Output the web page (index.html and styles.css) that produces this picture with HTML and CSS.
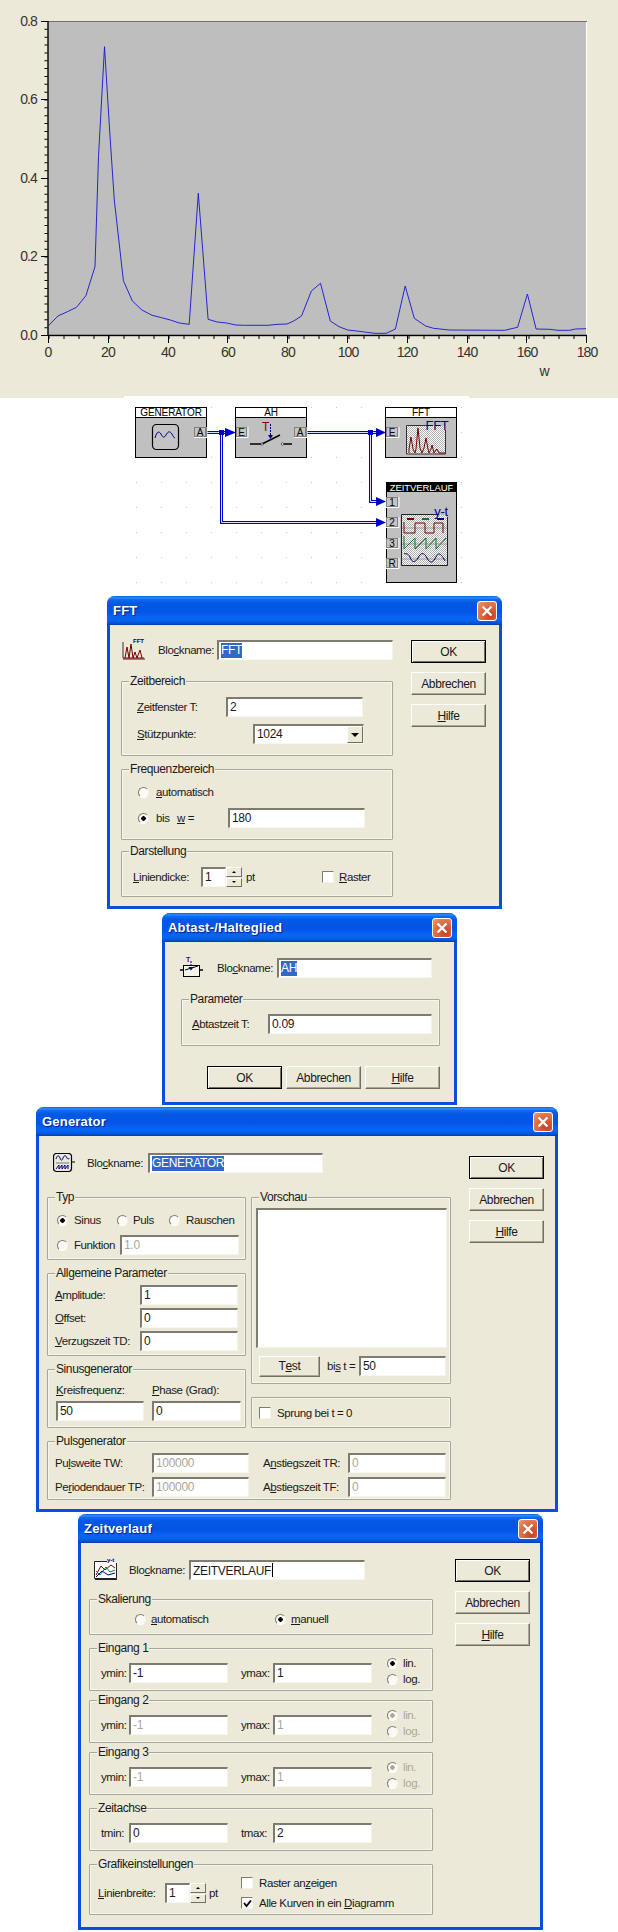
FILE: index.html
```html
<!DOCTYPE html>
<html lang="en">
<head>
    <meta charset="UTF-8">
    <title>FFT Simulation</title>
    <link rel="stylesheet" href="styles.css">
</head>
<body>
    <section class="chart">
        <svg class="chart-svg" width="618" height="396" viewBox="0 0 618 396">
            <rect x="48" y="21" width="539" height="314" fill="#bebebe"/>
            <path d="M48 21.5H587" stroke="#6e6e6e"/>
            <path d="M586.5 22V336M49 336.5H587" stroke="#fff"/>
            <path d="M48 21V336M48 335.5H587" stroke="#000" stroke-width="1.4"/>
            <path d="M41 21.5H48M41 99.5H48M41 178.5H48M41 256.5H48M41 335.5H48" stroke="#000"/>
            <path d="M46 21V335" stroke="#000" stroke-width="3" stroke-dasharray="1 6.85"/>
            <path d="M48.5 337H587" stroke="#000" stroke-width="4" stroke-dasharray="1 14"/>
            <path d="M48.5 335V343M108.5 335V343M168.5 335V343M227.5 335V343M287.5 335V343M347.5 335V343M407.5 335V343M467.5 335V343M526.5 335V343M586.5 335V343" stroke="#000"/>
            <polyline class="curve" points="48.5,325.7 57.9,316 67.4,311.7 76.5,307.3 85.9,295.7 95,266.7 98.5,156.7 104.5,46.7 109.6,130 114.3,200 123.4,280.7 132.4,301 141.9,310 152.1,315.3 161.6,317.7 170.3,320 179.3,323 189.2,324.3 198.3,193.3 208.1,319.3 217.2,322 226.6,323 235.7,325 244.4,325.3 268,325.3 277.9,324.3 287,324 293.7,321 301.5,316 311.4,291 320.5,283.3 330.3,321 339,326.7 347.7,330 356.7,331 364.6,332 374.5,333.3 386.3,333.3 395.4,329 405.2,286 414.3,318.3 425.7,326 433.6,328.3 449.3,330 504.5,330.3 517.6,327.3 527.4,294 536.1,329 549.9,329.3 557.7,330.3 569.6,330.3 575.5,329 586.1,328.7"/>
            <g class="axis-y">
                <text x="37" y="26">0.8</text>
                <text x="37" y="104">0.6</text>
                <text x="37" y="183">0.4</text>
                <text x="37" y="261">0.2</text>
                <text x="37" y="340">0.0</text>
            </g>
            <g class="axis-x">
                <text x="48" y="357">0</text>
                <text x="108" y="357">20</text>
                <text x="168" y="357">40</text>
                <text x="228" y="357">60</text>
                <text x="288" y="357">80</text>
                <text x="348" y="357">100</text>
                <text x="407" y="357">120</text>
                <text x="467" y="357">140</text>
                <text x="527" y="357">160</text>
                <text x="587" y="357">180</text>
                <text x="544" y="376">w</text>
            </g>
        </svg>
    </section>

    <section class="diagram">
        <svg width="345" height="200" viewBox="124 396 345 200">
            <defs>
                <pattern id="grid-dots" x="11" y="7" width="25" height="25" patternUnits="userSpaceOnUse">
                    <rect width="1" height="1" fill="#c4c4c4"/>
                </pattern>
                <pattern id="dither" width="2" height="2" patternUnits="userSpaceOnUse">
                    <rect width="2" height="2" fill="#fff"/>
                    <rect width="1" height="1" fill="#b0b0b0"/>
                    <rect x="1" y="1" width="1" height="1" fill="#b0b0b0"/>
                </pattern>
            </defs>
            <rect x="124" y="396" width="345" height="200" fill="url(#grid-dots)"/>

            <!-- wires -->
            <g class="wire">
                <path d="M207 432.5H226"/>
                <path d="M307 432.5H376"/>
                <path d="M221.5 432.5V522.5H378"/>
                <path d="M370.5 432.5V501.5H378"/>
            </g>
            <g class="wire-inner">
                <path d="M207 432.5H226"/>
                <path d="M307 432.5H376"/>
                <path d="M221.5 432.5V522.5H378"/>
                <path d="M370.5 432.5V501.5H378"/>
            </g>
            <g fill="#0000c8">
                <rect x="219" y="430" width="5" height="5"/>
                <rect x="368" y="430" width="5" height="5"/>
                <path d="M225 428L236 432.5L225 437ZM376 428L386 432.5L376 437ZM376 497L386 501.5L376 506ZM376 518L386 522.5L376 527Z"/>
            </g>

            <!-- GENERATOR -->
            <rect class="block" x="135.5" y="407.5" width="71" height="50"/>
            <rect class="block-head" x="135.5" y="407.5" width="71" height="10"/>
            <text class="block-label" x="171" y="416.3">GENERATOR</text>
            <rect x="152.5" y="424.5" width="26" height="25" rx="4" fill="#c4c4c4" stroke="#000" stroke-width="1.2"/>
            <path d="M155 438C157 431 159 431 161 434C163 438 164 438 166 435C168 431 170 431 172 434C173 436 174 438 175 438" fill="none" stroke="#000080"/>
            <rect class="port" x="194.5" y="427.5" width="11" height="9"/>
            <path class="port-edge" d="M194 437.5H207V427"/>
            <text class="port-label" x="200" y="436">A</text>

            <!-- AH -->
            <rect class="block" x="235.5" y="407.5" width="71" height="50"/>
            <rect class="block-head" x="235.5" y="407.5" width="71" height="10"/>
            <text class="block-label" x="271" y="416.3">AH</text>
            <rect class="port" x="236.5" y="427.5" width="10" height="9"/>
            <path class="port-edge" d="M236 437.5H248V427"/>
            <text class="port-label" x="241.5" y="436">E</text>
            <rect class="port" x="294.5" y="427.5" width="11" height="9"/>
            <path class="port-edge" d="M294 437.5H307V427"/>
            <text class="port-label" x="300" y="436">A</text>
            <path d="M250 444H261M262 444L280 435M284 444H292" fill="none" stroke="#000" stroke-width="1.6"/>
            <circle cx="262" cy="444" r="1.2" fill="#fff" stroke="#000" stroke-width=".6"/>
            <circle cx="282.5" cy="444" r="1.2" fill="#fff" stroke="#000" stroke-width=".6"/>
            <text class="switch-t" x="262" y="431">T</text>
            <path d="M270.5 424V436" stroke="#000080" stroke-dasharray="2 1"/>
            <path d="M268 435H273L270.500 439Z" fill="#000080"/>

            <!-- FFT -->
            <rect class="block" x="385.5" y="407.5" width="71" height="50"/>
            <rect class="block-head" x="385.5" y="407.5" width="71" height="10"/>
            <text class="block-label" x="421" y="416.3">FFT</text>
            <rect class="port" x="386.5" y="427.5" width="11" height="9"/>
            <path class="port-edge" d="M386 437.5H399V427"/>
            <text class="port-label" x="392" y="436">E</text>
            <rect x="407" y="426" width="38" height="28" fill="url(#dither)"/>
            <path d="M427 425.5H406.5V454H445.5V430" fill="none" stroke="#333"/>
            <path d="M409 453V449L411 437L413 449L415 453L416 449L418 428L420 448L422 453L424 448L426 438L428 449L429 453L431 449L432 445L434 453L436 450L437 449L439 453H445" fill="none" stroke="#7a0000"/>
            <text class="fft-label" x="437" y="430">FFT</text>

            <!-- ZEITVERLAUF -->
            <rect class="block" x="386.5" y="482.5" width="70" height="100"/>
            <rect x="386" y="482" width="71" height="10" fill="#000"/>
            <text class="block-label head-dark" x="421.5" y="491">ZEITVERLAUF</text>
            <rect class="port" x="386.5" y="497.5" width="11" height="9"/>
            <path class="port-edge" d="M386 507.5H399V497"/>
            <text class="port-label" x="392" y="506">1</text>
            <rect class="port" x="386.5" y="517.5" width="11" height="9"/>
            <path class="port-edge" d="M386 527.5H399V517"/>
            <text class="port-label" x="392" y="526">2</text>
            <rect class="port" x="386.5" y="538.5" width="11" height="9"/>
            <path class="port-edge" d="M386 548.5H399V538"/>
            <text class="port-label" x="392" y="547">3</text>
            <rect class="port" x="386.5" y="558.5" width="11" height="9"/>
            <path class="port-edge" d="M386 568.5H399V558"/>
            <text class="port-label" x="392" y="567">R</text>
            <rect x="402" y="515" width="45" height="50" fill="url(#dither)"/>
            <path d="M439 514.5H401.5V565.5H447.5V517" fill="none" stroke="#222"/>
            <path d="M407 519H414" stroke="#7a0000" stroke-width="2"/>
            <path d="M422 519H429" stroke="#0a7a2a" stroke-width="2"/>
            <path d="M437 519H444" stroke="#000080" stroke-width="2"/>
            <path d="M402 528H447M402 544H447M402 559H447" stroke="#888" stroke-width=".7"/>
            <path d="M404 522V533H415V523H425V533H434V523H443V533" fill="none" stroke="#7a0000"/>
            <path d="M404 536V549L415 538V549L426 538V549L436 538V549L446 538" fill="none" stroke="#0a6a2a"/>
            <path d="M404 553C405 555 408 552 410 557C412 563 415 563 418 558C421 552 424 552 427 558C430 564 433 563 436 557C438 552 441 553 445 561" fill="none" stroke="#000060"/>
            <text class="fft-label" x="441" y="516">y-t</text>
        </svg>
    </section>

    <!-- FFT dialog -->
    <section class="dlg dlg-fft">
        <div class="dlg-title">
            <span>FFT</span>
            <span class="close"><svg width="12" height="12" viewBox="0 0 12 12"><path d="M1.5 1.5L10.5 10.5M10.5 1.5L1.5 10.5" stroke="#fff" stroke-width="2.4"/></svg></span>
        </div>
        <div class="dlg-body">
            <div class="dlg-main">
                <div class="row head">
                    <svg class="icon" width="23" height="22" viewBox="0 0 23 22">
                        <path d="M1 4V20H22" fill="none" stroke="#333"/>
                        <path d="M1 21H23" stroke="#7a0000"/>
                        <path d="M3 20L5 9L7 20L9 6L11 20L13 14L15 20L18 12L20 20" fill="none" stroke="#7a0000"/>
                        <text class="icon-text" x="11" y="5">FFT</text>
                    </svg>
                    <span>Blo<u>c</u>kname:</span>
                    <div class="field"><span class="sel">FFT</span></div>
                </div>
                <div class="group fft-zeit">
                    <span class="legend">Zeitbereich</span>
                    <div class="row">
                        <span><u>Z</u>eitfenster T:</span>
                        <div class="field">2</div>
                    </div>
                    <div class="row">
                        <span><u>S</u>tützpunkte:</span>
                        <div class="field combo">1024<span class="combo-btn"></span></div>
                    </div>
                </div>
                <div class="group fft-freq">
                    <span class="legend">Frequenzbereich</span>
                    <div class="row">
                        <span class="radio"></span>
                        <span><u>a</u>utomatisch</span>
                    </div>
                    <div class="row">
                        <span class="radio on"></span>
                        <span>bis</span>
                        <span><u>w</u> =</span>
                        <div class="field">180</div>
                    </div>
                </div>
                <div class="group fft-show">
                    <span class="legend">Darstellung</span>
                    <div class="row">
                        <span><u>L</u>iniendicke:</span>
                        <div class="field">1</div>
                        <div class="spin"><span class="spin-up"></span><span class="spin-down"></span></div>
                        <span>pt</span>
                        <span class="check"></span>
                        <span><u>R</u>aster</span>
                    </div>
                </div>
            </div>
            <div class="dlg-buttons">
                <div class="btn default">OK</div>
                <div class="btn">Abbrechen</div>
                <div class="btn"><u>H</u>ilfe</div>
            </div>
        </div>
    </section>

    <!-- Abtast-/Halteglied dialog -->
    <section class="dlg dlg-ah">
        <div class="dlg-title">
            <span>Abtast-/Halteglied</span>
            <span class="close"><svg width="12" height="12" viewBox="0 0 12 12"><path d="M1.5 1.5L10.5 10.5M10.5 1.5L1.5 10.5" stroke="#fff" stroke-width="2.4"/></svg></span>
        </div>
        <div class="dlg-body">
            <div class="dlg-main">
                <div class="row head">
                    <svg class="icon" width="23" height="22" viewBox="0 0 23 22">
                        <path d="M0 14H4M19 14H23" stroke="#000" stroke-width="1.4"/>
                        <rect x="3.5" y="9.5" width="16" height="11" fill="#f4f3ea" stroke="#000"/>
                        <path d="M5 14L18 10" stroke="#000"/>
                        <path d="M11 5V12" stroke="#000080" stroke-dasharray="2 1"/>
                        <path d="M8.5 11H13.5L11 14.5Z" fill="#000080"/>
                        <text class="icon-t" x="6" y="6">T</text>
                    </svg>
                    <span>Blo<u>c</u>kname:</span>
                    <div class="field"><span class="sel">AH</span></div>
                </div>
                <div class="group ah-param">
                    <span class="legend">Parameter</span>
                    <div class="row">
                        <span><u>A</u>btastzeit T:</span>
                        <div class="field">0.09</div>
                    </div>
                </div>
                <div class="ah-buttons">
                    <div class="btn default">OK</div>
                    <div class="btn">Abbrechen</div>
                    <div class="btn"><u>H</u>ilfe</div>
                </div>
            </div>
        </div>
    </section>

    <!-- Generator dialog -->
    <section class="dlg dlg-gen">
        <div class="dlg-title">
            <span>Generator</span>
            <span class="close"><svg width="12" height="12" viewBox="0 0 12 12"><path d="M1.5 1.5L10.5 10.5M10.5 1.5L1.5 10.5" stroke="#fff" stroke-width="2.4"/></svg></span>
        </div>
        <div class="dlg-body">
            <div class="dlg-main">
                <div class="row head">
                    <svg class="icon" width="22" height="20" viewBox="0 0 22 20">
                        <rect x=".5" y=".5" width="18" height="18" rx="3" fill="#ece9d8" stroke="#000" stroke-width="1.2"/>
                        <path d="M19 9H22" stroke="#000"/>
                        <path d="M3 6C4 2 6 2 7 5C8 8 9 8 10 5C11 2 13 2 14 5C15 7 16 6 16 5" fill="none" stroke="#000080"/>
                        <path d="M3 10H16" stroke="#777"/>
                        <path d="M3 16L6 12V16L9 12V16L12 12V16L15 12V16" fill="none" stroke="#000080"/>
                    </svg>
                    <span>Blo<u>c</u>kname:</span>
                    <div class="field"><span class="sel">GENERATOR</span></div>
                </div>
                <div class="gen-grid">
                    <div class="gen-col">
                        <div class="group gen-typ">
                            <span class="legend">Typ</span>
                            <div class="row">
                                <span class="radio on"></span><span>Sinus</span>
                                <span class="radio"></span><span>Puls</span>
                                <span class="radio"></span><span>Rauschen</span>
                            </div>
                            <div class="row">
                                <span class="radio"></span><span>Funktion</span>
                                <div class="field off">1.0</div>
                            </div>
                        </div>
                        <div class="group gen-param">
                            <span class="legend">Allgemeine Parameter</span>
                            <div class="row">
                                <span><u>A</u>mplitude:</span>
                                <div class="field">1</div>
                            </div>
                            <div class="row">
                                <span><u>O</u>ffset:</span>
                                <div class="field">0</div>
                            </div>
                            <div class="row">
                                <span><u>V</u>erzugszeit TD:</span>
                                <div class="field">0</div>
                            </div>
                        </div>
                        <div class="group gen-sine">
                            <span class="legend">Sinusgenerator</span>
                            <div class="sine-grid">
                                <span><u>K</u>reisfrequenz:</span>
                                <span><u>P</u>hase (Grad):</span>
                                <div class="field">50</div>
                                <div class="field">0</div>
                            </div>
                        </div>
                    </div>
                    <div class="gen-col">
                        <div class="group gen-preview">
                            <span class="legend">Vorschau</span>
                            <div class="preview-box"></div>
                            <div class="row">
                                <div class="btn">T<u>e</u>st</div>
                                <span class="until">bi<u>s</u> t =</span>
                                <div class="field">50</div>
                            </div>
                        </div>
                        <div class="group gen-jump">
                            <div class="row">
                                <span class="check"></span>
                                <span>Sprung bei t = 0</span>
                            </div>
                        </div>
                    </div>
                </div>
                <div class="group gen-puls">
                    <span class="legend">Pulsgenerator</span>
                    <div class="row">
                        <span>Pu<u>l</u>sweite TW:</span>
                        <div class="field off">100000</div>
                        <span class="until">A<u>n</u>stiegszeit TR:</span>
                        <div class="field off">0</div>
                    </div>
                    <div class="row">
                        <span>Pe<u>r</u>iodendauer TP:</span>
                        <div class="field off">100000</div>
                        <span class="until">A<u>b</u>stiegszeit TF:</span>
                        <div class="field off">0</div>
                    </div>
                </div>
            </div>
            <div class="dlg-buttons">
                <div class="btn default">OK</div>
                <div class="btn">Abbrechen</div>
                <div class="btn"><u>H</u>ilfe</div>
            </div>
        </div>
    </section>

    <!-- Zeitverlauf dialog -->
    <section class="dlg dlg-time">
        <div class="dlg-title">
            <span>Zeitverlauf</span>
            <span class="close"><svg width="12" height="12" viewBox="0 0 12 12"><path d="M1.5 1.5L10.5 10.5M10.5 1.5L1.5 10.5" stroke="#fff" stroke-width="2.4"/></svg></span>
        </div>
        <div class="dlg-body">
            <div class="dlg-main">
                <div class="row head">
                    <svg class="icon" width="23" height="22" viewBox="0 0 23 22">
                        <rect x="1" y="4" width="21" height="16" fill="#fff"/>
                        <path d="M13 3.5H.5V20.5H22.5V5" fill="none" stroke="#222"/>
                        <path d="M1 21.5H23" stroke="#222"/>
                        <path d="M2 17L7 8L11 12L17 7L21 10" fill="none" stroke="#7a0000"/>
                        <path d="M2 13L6 17L12 9L16 14L21 12" fill="none" stroke="#0a7a2a"/>
                        <path d="M2 19L8 13L14 17L21 15" fill="none" stroke="#000080"/>
                        <text class="icon-text" x="13" y="4">y-t</text>
                    </svg>
                    <span>Blo<u>c</u>kname:</span>
                    <div class="field">ZEITVERLAUF<span class="caret"></span></div>
                </div>
                <div class="group time-scale">
                    <span class="legend">Skalierung</span>
                    <div class="row">
                        <span class="radio"></span><span><u>a</u>utomatisch</span>
                        <span class="radio on"></span><span><u>m</u>anuell</span>
                    </div>
                </div>
                <div class="group time-in">
                    <span class="legend">Eingang 1</span>
                    <div class="row">
                        <span>ymin:</span>
                        <div class="field">-1</div>
                        <span class="until">ymax:</span>
                        <div class="field">1</div>
                        <div class="radio-stack">
                            <div class="radio-line"><span class="radio on"></span><span>lin.</span></div>
                            <div class="radio-line"><span class="radio"></span><span>log.</span></div>
                        </div>
                    </div>
                </div>
                <div class="group time-in">
                    <span class="legend">Eingang 2</span>
                    <div class="row">
                        <span>ymin:</span>
                        <div class="field off">-1</div>
                        <span class="until">ymax:</span>
                        <div class="field off">1</div>
                        <div class="radio-stack off">
                            <div class="radio-line"><span class="radio on"></span><span>lin.</span></div>
                            <div class="radio-line"><span class="radio"></span><span>log.</span></div>
                        </div>
                    </div>
                </div>
                <div class="group time-in">
                    <span class="legend">Eingang 3</span>
                    <div class="row">
                        <span>ymin:</span>
                        <div class="field off">-1</div>
                        <span class="until">ymax:</span>
                        <div class="field off">1</div>
                        <div class="radio-stack off">
                            <div class="radio-line"><span class="radio on"></span><span>lin.</span></div>
                            <div class="radio-line"><span class="radio"></span><span>log.</span></div>
                        </div>
                    </div>
                </div>
                <div class="group time-in time-axis">
                    <span class="legend">Zeitachse</span>
                    <div class="row">
                        <span>tmin:</span>
                        <div class="field">0</div>
                        <span class="until">tmax:</span>
                        <div class="field">2</div>
                    </div>
                </div>
                <div class="group time-gfx">
                    <span class="legend">Grafikeinstellungen</span>
                    <div class="row">
                        <span><u>L</u>inienbreite:</span>
                        <div class="field">1</div>
                        <div class="spin"><span class="spin-up"></span><span class="spin-down"></span></div>
                        <span>pt</span>
                        <div class="check-stack">
                            <div class="check-line"><span class="check"></span><span>Raster an<u>z</u>eigen</span></div>
                            <div class="check-line"><span class="check"><svg width="9" height="9" viewBox="0 0 9 9"><path d="M1 4L3.5 7L8 1.5" fill="none" stroke="#000" stroke-width="1.8"/></svg></span><span>Alle Kurven in ein <u>D</u>iagramm</span></div>
                        </div>
                    </div>
                </div>
            </div>
            <div class="dlg-buttons">
                <div class="btn default">OK</div>
                <div class="btn">Abbrechen</div>
                <div class="btn"><u>H</u>ilfe</div>
            </div>
        </div>
    </section>
</body>
</html>
```

FILE: styles.css
```css
body {
    margin: 0;
    width: 618px;
    height: 1932px;
    overflow: hidden;
    background: #fff;
    font-family: "Liberation Sans", Arial, sans-serif;
    font-size: 11.5px;
    letter-spacing: -0.4px;
    color: #1a1a1a;
}

/* chart */
.chart {
    height: 398px;
    background: #ece9d8;
}
.chart-svg {
    display: block;
}
.curve {
    fill: none;
    stroke: #1414d2;
    stroke-width: 0.9;
}
.axis-y text, .axis-x text {
    font-size: 14px;
    letter-spacing: -0.9px;
    fill: #333;
}
.axis-y text {
    text-anchor: end;
}
.axis-x text {
    text-anchor: middle;
}

/* block diagram */
.diagram {
    height: 200px;
    margin: -2px 0 0 124px;
    width: 345px;
    background: #fff;
}
.diagram svg {
    display: block;
}
.wire path, .wire-inner path {
    fill: none;
}
.wire path {
    stroke: #0000c8;
    stroke-width: 3;
}
.wire-inner path {
    stroke: #dcdcfa;
    stroke-width: 1;
}
.block {
    fill: #c0c0c0;
    stroke: #000;
}
.block-head {
    fill: #fff;
    stroke: #000;
}
.block-label {
    font-size: 10px;
    letter-spacing: -0.1px;
    text-anchor: middle;
    fill: #000;
}
.head-dark {
    fill: #fff;
    font-size: 9.5px;
}
.port {
    fill: #c4c4c4;
    stroke: #808080;
}
.port-edge {
    fill: none;
    stroke: #fff;
}
.port-label {
    font-size: 10px;
    letter-spacing: 0;
    text-anchor: middle;
    fill: #000;
}
.switch-t {
    font-size: 12px;
    fill: #800000;
}
.fft-label {
    font-size: 13px;
    letter-spacing: -0.3px;
    text-anchor: middle;
    fill: #000080;
}
.icon-text {
    font-size: 6px;
    font-weight: bold;
    letter-spacing: 0;
    fill: #000080;
}
.icon-t {
    font-size: 7px;
    font-weight: bold;
    fill: #800000;
}

/* xp dialog frame */
.dlg {
    box-sizing: border-box;
    border: 3px solid #0a4fdc;
    border-top: 0;
    border-radius: 8px 8px 0 0;
    background: #ece9d8;
}
.dlg-title {
    display: flex;
    justify-content: space-between;
    align-items: center;
    height: 29px;
    margin: 0 -3px;
    padding: 0 5px 0 6px;
    border-radius: 8px 8px 0 0;
    background: linear-gradient(180deg, #0a5ce6 0, #2f8cf8 6%, #0f6cf0 12%, #0458e4 24%, #0355e6 56%, #0a62f4 72%, #0664f2 84%, #0452d4 94%, #0a3aa8 100%);
    color: #fff;
    font-size: 13px;
    font-weight: bold;
    letter-spacing: 0.2px;
    text-shadow: 1px 1px 1px #0a1f80;
}
.close {
    display: flex;
    align-items: center;
    justify-content: center;
    box-sizing: border-box;
    width: 20px;
    height: 20px;
    border: 1px solid #fff;
    border-radius: 3px;
    background: radial-gradient(circle at 70% 75%, #c8401c, #e4794f 70%, #e8a080);
}
.dlg-body {
    display: flex;
}
.dlg-main {
    flex: none;
}
.dlg-buttons {
    display: flex;
    flex-direction: column;
    gap: 9px;
    width: 75px;
}

/* controls */
.row {
    display: grid;
    grid-auto-rows: 20px;
    align-items: center;
    height: 20px;
    white-space: nowrap;
}
.field {
    box-sizing: border-box;
    position: relative;
    height: 20px;
    padding: 1px 0 0 2px;
    line-height: 15px;
    font-size: 12px;
    letter-spacing: -0.3px;
    background: #fff;
    border: 2px solid;
    border-color: #7e7c70 #f4f3ea #f7f6ef #7e7c70;
    border-right-width: 1px;
    border-bottom-width: 1px;
    white-space: nowrap;
}
.field.off {
    color: #aca899;
}
.sel {
    display: inline-block;
    background: #316ac5;
    color: #fff;
}
.caret {
    display: inline-block;
    width: 1px;
    height: 14px;
    margin-left: 1px;
    vertical-align: -2px;
    background: #000;
}
.group {
    position: relative;
    box-sizing: border-box;
    border: 1px solid #a8a696;
    box-shadow: 0 0 0 1px #f6f5ee inset;
    border-radius: 1px;
}
.legend {
    position: absolute;
    top: -8px;
    left: 7px;
    padding: 0 1px;
    background: #ece9d8;
    font-size: 12px;
    line-height: 14px;
}
.radio {
    box-sizing: border-box;
    display: block;
    width: 11px;
    height: 11px;
    border: 1px solid;
    border-color: #7e7c70 #f4f3ea #fff #7e7c70;
    border-radius: 50%;
    background: #fbfaf6;
}
.radio.on {
    background: radial-gradient(circle, #000 2px, #fbfaf6 2.5px);
}
.check {
    box-sizing: border-box;
    display: flex;
    align-items: center;
    justify-content: center;
    width: 12px;
    height: 12px;
    border: 1px solid;
    border-color: #7e7c70 #f4f3ea #f4f3ea #7e7c70;
    background: #fff;
}
.btn {
    box-sizing: border-box;
    display: flex;
    align-items: center;
    justify-content: center;
    height: 23px;
    background: #ece9d8;
    border: 1px solid;
    border-color: #fff #716f64 #716f64 #fff;
    box-shadow: inset -1px -1px 0 #aca899;
    font-size: 12px;
}
.btn.default {
    border-color: #000;
    box-shadow: inset 1px 1px 0 #fff, inset -1px -1px 0 #716f64;
}
.spin {
    display: flex;
    flex-direction: column;
    gap: 1px;
    width: 16px;
    height: 20px;
}
.spin-up, .spin-down {
    flex: 1;
    display: flex;
    align-items: center;
    justify-content: center;
    background: #ece9d8;
    border: 1px solid;
    border-color: #fff #716f64 #716f64 #fff;
}
.spin-up::after {
    content: "";
    border: 2px solid transparent;
    border-top: 0;
    border-bottom: 2px solid #000;
}
.spin-down::after {
    content: "";
    border: 2px solid transparent;
    border-bottom: 0;
    border-top: 2px solid #000;
}
.combo-btn {
    position: absolute;
    top: 0;
    right: 0;
    box-sizing: border-box;
    display: flex;
    align-items: center;
    justify-content: center;
    width: 16px;
    height: 17px;
    background: #ece9d8;
    border: 1px solid;
    border-color: #fff #716f64 #716f64 #fff;
}
.combo-btn::after {
    content: "";
    border: 4px solid transparent;
    border-bottom: 0;
    border-top: 4px solid #000;
}
.until {
    padding-left: 14px;
}

/* fft */
.dlg-fft {
    width: 395px;
    height: 313px;
    margin-left: 107px;
}
.dlg-fft .dlg-body {
    padding: 15px 0 0 11px;
    gap: 18px;
}
.dlg-fft .dlg-main {
    width: 272px;
}
.dlg-fft .head {
    grid-template-columns: 37px 59px 176px;
}
.dlg-fft .icon {
    margin: -2px 0 0 1px;
}
.fft-zeit {
    height: 75px;
    margin-top: 21px;
    padding: 15px 0 0 15px;
}
.fft-zeit .row:nth-of-type(1) {
    grid-template-columns: 89px 137px;
}
.fft-zeit .row:nth-of-type(2) {
    grid-template-columns: 116px 111px;
    margin-top: 7px;
}
.fft-freq {
    height: 71px;
    margin-top: 13px;
    padding: 12px 0 0 16px;
}
.fft-freq .row:nth-of-type(1) {
    grid-template-columns: 18px auto;
}
.fft-freq .row:nth-of-type(2) {
    grid-template-columns: 18px 21px 51px 137px;
    margin-top: 6px;
}
.fft-show {
    height: 46px;
    margin-top: 11px;
    padding: 15px 0 0 11px;
}
.fft-show .row {
    grid-template-columns: 68px 25px 20px 76px 17px auto;
}

/* abtast */
.dlg-ah {
    width: 295px;
    height: 192px;
    margin: 4px 0 0 162px;
}
.dlg-ah .dlg-body {
    padding: 16px 0 0 16px;
}
.dlg-ah .head {
    grid-template-columns: 36px 60px 155px;
}
.dlg-ah .icon {
    margin: -2px 0 0 -1px;
}
.ah-param {
    width: 259px;
    height: 47px;
    margin-top: 21px;
    padding: 14px 0 0 10px;
}
.ah-param .row {
    grid-template-columns: 76px 164px;
}
.ah-buttons {
    display: grid;
    grid-template-columns: repeat(3, 75px);
    gap: 4px;
    margin: 20px 0 0 26px;
}

/* generator */
.dlg-gen {
    width: 522px;
    height: 405px;
    margin: 2px 0 0 36px;
}
.dlg-gen .dlg-body {
    padding: 17px 0 0 8px;
    gap: 18px;
}
.dlg-gen .dlg-main {
    width: 404px;
}
.dlg-gen .dlg-buttons {
    padding-top: 3px;
}
.dlg-gen .head {
    grid-template-columns: 40px 61px 175px;
}
.dlg-gen .icon {
    margin-left: 6px;
}
.gen-grid {
    display: grid;
    grid-template-columns: 199px 200px;
    gap: 5px;
    margin-top: 24px;
}
.gen-col {
    display: flex;
    flex-direction: column;
    gap: 13px;
}
.gen-typ {
    height: 63px;
    padding: 12px 0 0 9px;
}
.gen-typ .row:nth-of-type(1) {
    grid-template-columns: 17px 43px 16px 36px 17px auto;
}
.gen-typ .row:nth-of-type(2) {
    grid-template-columns: 17px 46px 119px;
    margin-top: 5px;
}
.gen-param {
    height: 83px;
    padding: 11px 0 0 7px;
}
.gen-param .row {
    grid-template-columns: 85px 98px;
    margin-bottom: 3px;
}
.gen-sine {
    height: 59px;
    padding: 14px 0 0 8px;
}
.sine-grid {
    display: grid;
    grid-template-columns: 88px 89px;
    grid-template-rows: 16px 20px;
    gap: 1px 8px;
}
.gen-preview {
    height: 187px;
    padding: 10px 0 0 4px;
}
.preview-box {
    box-sizing: border-box;
    width: 191px;
    height: 140px;
    background: #fff;
    border: 2px solid;
    border-color: #7e7c70 #f4f3ea #f4f3ea #7e7c70;
    border-right-width: 1px;
    border-bottom-width: 1px;
}
.gen-preview .row {
    grid-template-columns: 61px 39px 87px;
    margin: 8px 0 0 3px;
    height: 21px;
}
.gen-preview .btn {
    height: 21px;
}
.gen-preview .until {
    padding-left: 7px;
}
.gen-jump {
    display: flex;
    align-items: center;
    height: 31px;
    padding-left: 7px;
}
.gen-jump .row {
    grid-template-columns: 18px auto;
}
.gen-puls {
    height: 59px;
    margin-top: 13px;
    padding: 11px 0 0 7px;
}
.gen-puls .row {
    grid-template-columns: 97px 97px 99px 98px;
    margin-bottom: 4px;
}

/* zeitverlauf */
.dlg-time {
    width: 465px;
    height: 416px;
    margin: 2px 0 0 78px;
}
.dlg-time .dlg-body {
    padding: 17px 0 0 8px;
    gap: 22px;
}
.dlg-time .dlg-main {
    width: 344px;
}
.dlg-time .dlg-buttons {
    margin-top: -1px;
}
.dlg-time .head {
    grid-template-columns: 40px 60px 176px;
}
.dlg-time .icon {
    margin: -2px 0 0 5px;
}
.time-scale {
    height: 36px;
    margin-top: 19px;
    padding: 9px 0 0 45px;
}
.time-scale .row {
    grid-template-columns: 16px 124px 16px auto;
}
.time-in {
    height: 43px;
    margin-top: 9px;
    padding: 14px 0 0 11px;
}
.time-scale + .time-in, .time-axis {
    margin-top: 13px;
}
.time-in .row {
    grid-template-columns: 28px 99px 45px 99px auto;
}
.time-in .until {
    padding-left: 13px;
}
.radio-stack {
    margin: -4px 0 0 15px;
}
.radio-stack.off {
    color: #aca899;
}
.radio-stack.off .radio.on {
    background: radial-gradient(circle, #aca899 2px, #fbfaf6 2.5px);
}
.radio-line {
    display: grid;
    grid-template-columns: 16px auto;
    align-items: center;
    height: 16px;
}
.time-gfx {
    height: 51px;
    margin-top: 13px;
    padding: 18px 0 0 8px;
}
.time-gfx .row {
    grid-template-columns: 67px 25px 19px 32px auto;
}
.check-line {
    display: grid;
    grid-template-columns: 18px auto;
    align-items: center;
    height: 20px;
}
```
